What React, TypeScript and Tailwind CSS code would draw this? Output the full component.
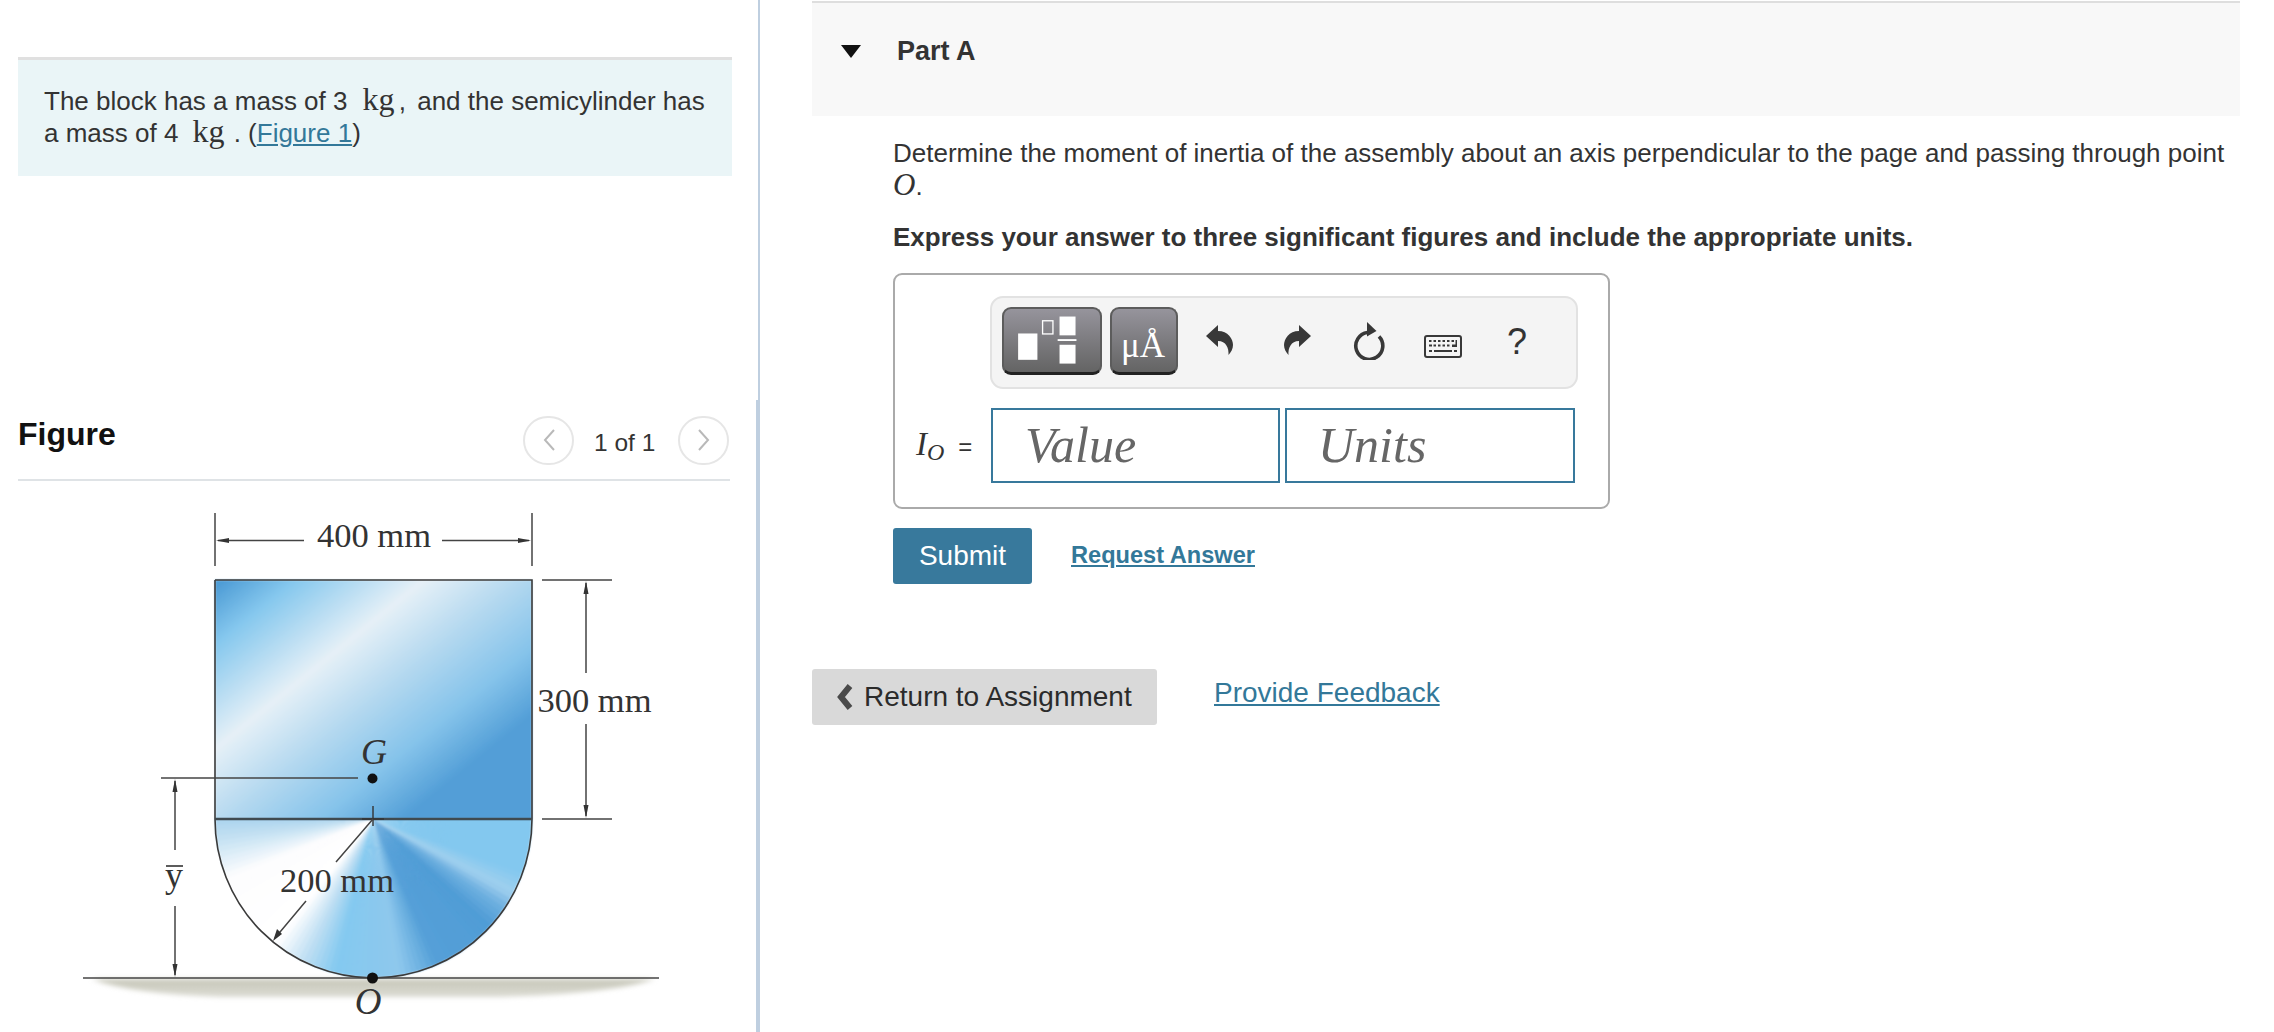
import React from 'react';

const SANS = "font-['Liberation_Sans',Arial,sans-serif]";

function lerpColor(a: number[], b: number[], t: number) {
  return a.map((v, i) => Math.round(v + (b[i] - v) * t));
}

// angle in degrees, clockwise from pointing right
const CONE_STOPS: [number, number[]][] = [
  [0, [131, 200, 239]],
  [20, [131, 200, 239]],
  [28, [160, 208, 238]],
  [34, [111, 176, 224]],
  [42, [80, 157, 214]],
  [66, [84, 159, 216]],
  [80, [142, 200, 236]],
  [104, [132, 201, 240]],
  [116, [192, 223, 243]],
  [128, [255, 255, 255]],
  [158, [253, 253, 254]],
  [172, [198, 226, 243]],
  [180, [170, 212, 238]],
];

function coneColor(angle: number) {
  for (let i = 1; i < CONE_STOPS.length; i++) {
    const [a0, c0] = CONE_STOPS[i - 1];
    const [a1, c1] = CONE_STOPS[i];
    if (angle <= a1) {
      const c = lerpColor(c0, c1, (angle - a0) / (a1 - a0));
      return `rgb(${c[0]},${c[1]},${c[2]})`;
    }
  }
  return 'rgb(170,212,238)';
}

function ConeWedges() {
  const cx = 373;
  const cy = 819;
  const r = 240;
  const wedges = [];
  for (let a = 0; a < 180; a += 2) {
    const a0 = (a * Math.PI) / 180;
    const a1 = ((a + 2.6) * Math.PI) / 180;
    wedges.push(
      <polygon
        key={a}
        fill={coneColor(a + 1)}
        points={`${cx},${cy} ${cx + r * Math.cos(a0)},${cy + r * Math.sin(a0)} ${cx + r * Math.cos(a1)},${cy + r * Math.sin(a1)}`}
      />,
    );
  }
  return <>{wedges}</>;
}

function AssemblyFigure() {
  const serif = { fontFamily: "'Liberation Serif', 'Times New Roman', serif" };
  return (
    <svg viewBox="80 481 600 551" className="block w-[600px] h-[551px] ml-[80px]">
      <defs>
        <linearGradient id="blockFill" gradientUnits="userSpaceOnUse" x1="300" y1="513" x2="495" y2="754">
          <stop offset="0.016" stopColor="#4f9dd6" />
          <stop offset="0.16" stopColor="#86c8ee" />
          <stop offset="0.42" stopColor="#e6f0f7" />
          <stop offset="0.61" stopColor="#b5d9f0" />
          <stop offset="0.81" stopColor="#85c3ea" />
          <stop offset="0.98" stopColor="#529ed7" />
        </linearGradient>
        <linearGradient id="groundFill" x1="0" y1="0" x2="0" y2="1">
          <stop offset="0" stopColor="#c6c6b8" />
          <stop offset="1" stopColor="#dcdcd4" />
        </linearGradient>
        <clipPath id="semiClip">
          <path d="M215 819 A158.500 159 0 0 0 532 819 Z" />
        </clipPath>
        <filter id="soft" x="-5%" y="-5%" width="110%" height="110%">
          <feGaussianBlur stdDeviation="0.8" />
        </filter>
        <filter id="softer" x="-10%" y="-60%" width="120%" height="220%">
          <feGaussianBlur stdDeviation="2.500" />
        </filter>
      </defs>

      {/* ground shadow */}
      <path d="M92 979 H655 Q610 994 500 997 H220 Q130 994 92 979 Z" fill="url(#groundFill)" filter="url(#softer)" />

      <g filter="url(#soft)">
        <rect x="215" y="580" width="317" height="239" fill="url(#blockFill)" />
        <g clipPath="url(#semiClip)">
          <ConeWedges />
        </g>
      </g>

      <g fill="none" stroke="#3a3a3a" strokeWidth="1.6">
        <path d="M215 580 H532 V819 M215 580 V819" />
        <path d="M215 819 A158.500 159 0 0 0 532 819" />
      </g>
      <path d="M215 819 H532" stroke="#3f4a50" strokeWidth="2.6" />
      <path d="M83 978 H659" stroke="#444" strokeWidth="1.6" />
      <path d="M373 806 V826 M362 819 H384" stroke="#333" strokeWidth="1.4" />

      <g fill="none" stroke="#444" strokeWidth="1.5">
        {/* 400 mm */}
        <path d="M215 513 V566 M532 513 V566" />
        <path d="M218 540.5 H304 M442 540.5 H529" />
        {/* 300 mm */}
        <path d="M542 580 H612 M542 819 H612" />
        <path d="M586 583 V673 M586 724 V816" />
        {/* y bar */}
        <path d="M161 778 H358" />
        <path d="M175 781 V850 M175 906 V975" />
        {/* 200 mm */}
        <path d="M373 819 L336 862 M306 901 L275 938" />
      </g>

      <g fill="#333">
        <path d="M216 540.5 L229 538 V543 Z" />
        <path d="M531 540.5 L518 538 V543 Z" />
        <path d="M586 581 L583.5 594 H588.5 Z" />
        <path d="M586 818 L583.5 805 H588.5 Z" />
        <path d="M175 779 L172.5 792 H177.5 Z" />
        <path d="M175 977 L172.5 964 H177.5 Z" />
        <path d="M273 941 L277 929 L282 934 Z" />
        <circle cx="372.5" cy="778.5" r="5" fill="#111" />
        <circle cx="372.5" cy="978" r="5.5" fill="#111" />
      </g>

      <g fill="#333" fontSize="34.5" style={serif}>
        <text x="374" y="547" textAnchor="middle">400 mm</text>
        <text x="594.500" y="712" textAnchor="middle">300 mm</text>
        <text x="337" y="892" textAnchor="middle">200 mm</text>
        <text x="374" y="764" textAnchor="middle" fontStyle="italic" fontSize="36">G</text>
        <text x="368" y="1014" textAnchor="middle" fontStyle="italic" fontSize="37">O</text>
        <text x="174" y="887" textAnchor="middle" fontSize="36">y</text>
      </g>
      <path d="M166 866 H183" stroke="#333" strokeWidth="1.6" />
    </svg>
  );
}

function UndoIcon({ flip = false }: { flip?: boolean }) {
  return (
    <svg viewBox="0 0 30 32" className={flip ? 'w-[30px] h-[32px] -scale-x-100' : 'w-[30px] h-[32px]'}>
      <path d="M1 11 L13 0 V6 C23 6 28 14 28 20 C28 24 26 27 23.500 30 C24 23 21 16 13 16 V22 Z" fill="#383838" />
    </svg>
  );
}

function RefreshIcon() {
  return (
    <svg viewBox="0 0 34 38" className="w-[34px] h-[38px]">
      <path d="M15.500 10.500 A13.500 13.500 0 1 0 27 14.500" fill="none" stroke="#383838" strokeWidth="3.600" />
      <path d="M15 0 L24.500 9 L15 14.500 Z" fill="#383838" />
    </svg>
  );
}

function KeyboardIcon() {
  const top = [5, 9.5, 14, 18.5, 23, 27.500];
  const mid = [9.5, 14, 18.500, 23];
  return (
    <svg viewBox="0 0 38 23" className="w-[38px] h-[23px]">
      <rect x="1" y="1" width="36" height="21" rx="2" fill="#f4f4f4" stroke="#383838" strokeWidth="2" />
      <g fill="#383838">
        {top.map((x) => (
          <rect key={x} x={x} y="5" width="2.500" height="2" />
        ))}
        <rect x="5" y="9.500" width="3" height="2" />
        {mid.map((x) => (
          <rect key={x} x={x} y="9.500" width="2.500" height="2" />
        ))}
        <path d="M28 9.500 H31.500 V5 H33 V12 H28 Z" />
        <rect x="5" y="15" width="3" height="2" />
        <rect x="10" y="15" width="18" height="2" />
        <rect x="30" y="15" width="3" height="2" />
      </g>
    </svg>
  );
}

function TemplatesIcon() {
  return (
    <svg viewBox="0 0 100 68" className="w-[96px] h-[64px]">
      <g fill="#fff">
        <rect x="14" y="26" width="20.500" height="28" />
        <rect x="58" y="8" width="17" height="20" />
        <rect x="56" y="32" width="20" height="2" />
        <rect x="58" y="38" width="17" height="20" />
      </g>
      <rect x="40" y="12.500" width="11" height="14" fill="none" stroke="#fff" strokeWidth="1.400" />
    </svg>
  );
}

function PagerButton({ dir }: { dir: 'left' | 'right' }) {
  return (
    <div className="w-[51px] h-[49px] rounded-full border-2 border-[#e6e6e6] flex items-center justify-center">
      <svg viewBox="0 0 14 24" className="w-[14px] h-[24px]">
        <path
          d={dir === 'left' ? 'M12 2 L3 12 L12 22' : 'M2 2 L11 12 L2 22'}
          fill="none"
          stroke="#b9b9b9"
          strokeWidth="2"
        />
      </svg>
    </div>
  );
}

export default function App() {
  return (
    <div className={`${SANS} flex w-full h-[1032px] overflow-hidden bg-white text-[#333]`}>
      {/* Left panel */}
      <aside className="w-[760px] shrink-0 flex flex-col">
        <div className="h-[401px] border-r-[2px] border-[#bfcfe0] pt-[57px] pl-[18px] pr-[26px]">
          <div className="h-[119px] border-t-[3px] border-[#e0e0e0] bg-[#eaf5f7] pt-[25px] px-[26px] text-[26px] leading-[32px] whitespace-nowrap">
            <div className="h-[32px]">
              The block has a mass of 3
              <span className="inline-block font-['Liberation_Serif',serif] text-[32px] leading-[26px] ml-[15px] -mr-[3px]">kg</span> ,{' '}
              <span className="ml-[4px]">and the semicylinder has</span>
            </div>
            <div className="h-[32px]">
              a mass of 4
              <span className="inline-block font-['Liberation_Serif',serif] text-[32px] leading-[26px] ml-[14px] mr-[2px]">kg</span> . (
              <a className="text-[#337899] underline">Figure 1</a>)
            </div>
          </div>
        </div>
        <div className="flex-1 border-r-[4px] border-[#bfcfe0]">
          <div className="ml-[18px] mr-[26px] h-[81px] border-b-2 border-[#dfe3e6] flex items-center justify-between pr-[1px]">
            <h2 className="text-[32px] leading-[64px] font-bold text-[#111] mb-[12px]">Figure</h2>
            <div className="flex items-center gap-[20px] mt-[1px]">
              <PagerButton dir="left" />
              <span className="text-[24.5px] leading-[32px] w-[64px] mt-[5px]">1 of 1</span>
              <PagerButton dir="right" />
            </div>
          </div>
          <AssemblyFigure />
        </div>
      </aside>

      {/* Right panel */}
      <main className="flex-1 min-w-0 pl-[52px] pr-[34px]">
        <header className="mt-px h-[115px] border-t-2 border-[#dedede] bg-[#f8f8f8] flex items-start pt-[30px] pl-[29px]">
          <svg viewBox="0 0 20 13" className="w-[20px] h-[13px] mt-[12px]">
            <path d="M0 0 H20 L10 13 Z" fill="#111" />
          </svg>
          <h3 className="ml-[36px] text-[27px] leading-[36px] font-bold">Part A</h3>
        </header>

        <div className="pl-[81px]">
          <p className="mt-[21px] text-[26px] leading-[32px]">
            Determine the moment of inertia of the assembly about an axis perpendicular to the page and passing through
            point <span className="inline-block font-['Liberation_Serif',serif] italic text-[31px] leading-none">O</span>.
          </p>
          <p className="mt-[19px] text-[26px] leading-[33px] font-bold">
            Express your answer to three significant figures and include the appropriate units.
          </p>

          {/* Answer box */}
          <div className="mt-[19px] w-[717px] h-[236px] rounded-[9px] border-2 border-[#aaaaaa] pt-[21px] pl-[95px]">
            <div className="w-[588px] h-[93px] rounded-[13px] border-2 border-[#e2e2e2] bg-[#f4f4f4] flex items-center pl-[10px] pb-[3px]">
              <button className="w-[100px] h-[68px] rounded-[9px] border-2 border-[#5c5c5c] border-b-[3px] border-b-[#222] bg-linear-to-b from-[#96949c] to-[#646464] flex items-center justify-center">
                <TemplatesIcon />
              </button>
              <button className="ml-[8px] w-[68px] h-[68px] rounded-[9px] border-2 border-[#5c5c5c] border-b-[3px] border-b-[#222] bg-linear-to-b from-[#96949c] to-[#646464] font-['Liberation_Serif',serif] text-[35px] leading-[35px] text-white pt-[9px] pr-[2px]">
                μÅ
              </button>
              <div className="ml-[27px]">
                <UndoIcon />
              </div>
              <div className="ml-[47px]">
                <UndoIcon flip />
              </div>
              <div className="ml-[40px]">
                <RefreshIcon />
              </div>
              <div className="ml-[38px] mt-[10px]">
                <KeyboardIcon />
              </div>
              <span className="ml-[45px] text-[36px] leading-[40px] mt-[2px]">?</span>
            </div>
            <div className="relative mt-[19px] flex gap-[5px] w-[584px] ml-[1px]">
              <div className="absolute left-[-75px] top-[16px] flex items-baseline whitespace-nowrap">
                <span className="font-['Liberation_Serif',serif] italic text-[33px] leading-[40px]">I</span>
                <span className="font-['Liberation_Serif',serif] italic text-[24px] leading-[23px] translate-y-[5px]">O</span>
                <span className="ml-[14px] text-[24px] leading-[40px]">=</span>
              </div>
              <div className="w-[289px] h-[75px] border-2 border-[#38799c] pl-[32px] font-['Liberation_Serif',serif] italic text-[50px] leading-[70px] text-[#666]">
                Value
              </div>
              <div className="w-[290px] h-[75px] border-2 border-[#38799c] pl-[31px] font-['Liberation_Serif',serif] italic text-[50px] leading-[70px] text-[#666]">
                Units
              </div>
            </div>
          </div>

          <div className="mt-[19px] flex items-center">
            <button className="w-[139px] h-[56px] rounded-[3px] bg-[#38799c] text-white text-[28px]">Submit</button>
            <a className="ml-[39px] text-[23.6px] font-bold text-[#337899] underline mb-[1px]">Request Answer</a>
          </div>
        </div>

        <div className="mt-[85px] flex items-start">
          <button className="w-[345px] h-[56px] rounded-[3px] bg-[#d9d9d9] flex items-center pl-[25px] text-[28px] text-[#2b2b2b]">
            <svg viewBox="0 0 16 26" className="w-[16px] h-[26px]">
              <path d="M13 2 L4 13 L13 24" fill="none" stroke="#4a4a4a" strokeWidth="6" />
            </svg>
            <span className="ml-[11px]">Return to Assignment</span>
          </button>
          <a className="ml-[57px] mt-[6px] text-[28px] leading-[36px] text-[#337899] underline">Provide Feedback</a>
        </div>
      </main>
    </div>
  );
}
